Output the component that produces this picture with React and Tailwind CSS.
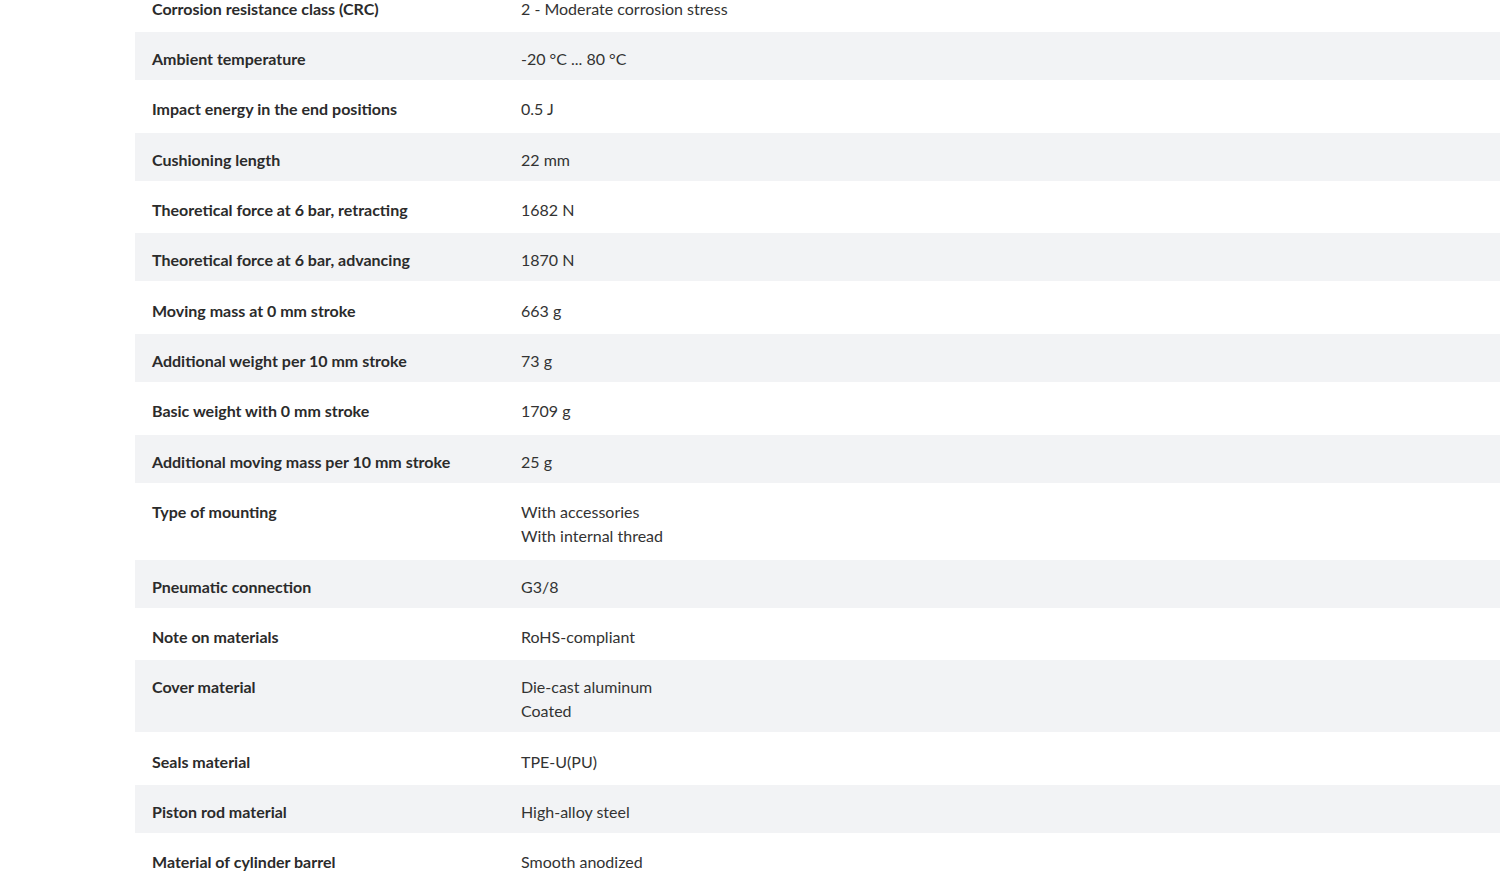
const specs = [
  ["Corrosion resistance class (CRC)", ["2 - Moderate corrosion stress"]],
  ["Ambient temperature", ["-20 °C ... 80 °C"]],
  ["Impact energy in the end positions", ["0.5 J"]],
  ["Cushioning length", ["22 mm"]],
  ["Theoretical force at 6 bar, retracting", ["1682 N"]],
  ["Theoretical force at 6 bar, advancing", ["1870 N"]],
  ["Moving mass at 0 mm stroke", ["663 g"]],
  ["Additional weight per 10 mm stroke", ["73 g"]],
  ["Basic weight with 0 mm stroke", ["1709 g"]],
  ["Additional moving mass per 10 mm stroke", ["25 g"]],
  ["Type of mounting", ["With accessories", "With internal thread"]],
  ["Pneumatic connection", ["G3/8"]],
  ["Note on materials", ["RoHS-compliant"]],
  ["Cover material", ["Die-cast aluminum", "Coated"]],
  ["Seals material", ["TPE-U(PU)"]],
  ["Piston rod material", ["High-alloy steel"]],
  ["Material of cylinder barrel", ["Smooth anodized"]],
];

export default function App() {
  return (
    <div className="h-[878px] overflow-hidden bg-white font-['Lato',sans-serif] text-[16px] text-[#333]">
      <div className="ml-[135px] -mt-[18.4px] flex flex-col gap-[2.36px]">
        {specs.map(([label, values], i) => (
          <div
            key={label}
            className={`flex pt-[15px] pb-[9px] leading-6 min-h-12 ${i % 2 === 1 ? "bg-[#f2f3f5]" : "bg-white"}`}
          >
            {/* label column ends where the values start (x = 521) */}
            <div className="w-[386px] shrink-0 pl-[17px] font-bold text-[#2b2b2b]">{label}</div>
            <div className="flex flex-col">
              {values.map((v) => (
                <span key={v}>{v}</span>
              ))}
            </div>
          </div>
        ))}
      </div>
    </div>
  );
}
